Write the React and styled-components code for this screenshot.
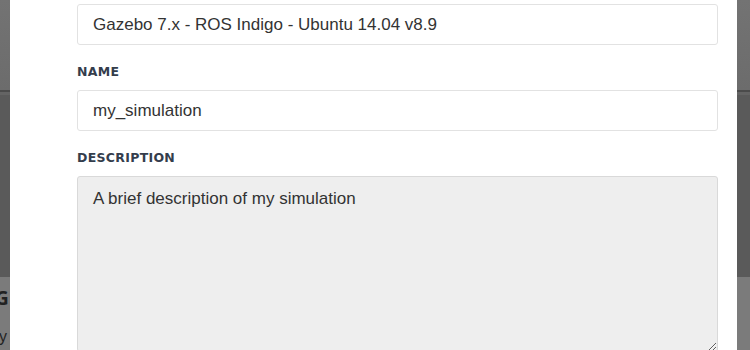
import React from 'react';
import styled, { createGlobalStyle } from 'styled-components';

const GlobalStyle = createGlobalStyle`
  html, body {
    margin: 0;
    padding: 0;
    height: 100%;
    overflow: hidden;
  }
  body {
    font-family: "Liberation Sans", Arial, sans-serif;
  }
`;

// page behind the modal, already dimmed
const Page = styled.div`
  height: 350px;
  display: flex;
  flex-direction: column;
  background: #5b5b5b;
`;

const PageHeader = styled.div`
  height: 90px;
  background: linear-gradient(#737373, #6c6c6c);
  border-bottom: 2px solid #4b4b4b;
`;

const HeaderStrip = styled.div`
  height: 3px;
  background: #646464;
`;

const PageBody = styled.div`
  height: 182px;
  background: #5a5a5a;
`;

const PageFooter = styled.div`
  flex: 1;
  background: #7b7b7b;
  padding: 10px 0 0 0;
  display: flex;
  flex-direction: column;
  gap: 18px;
  color: #222;
`;

const FooterTitle = styled.div`
  font-family: "Open Sans", sans-serif;
  font-weight: 700;
  font-size: 19px;
  margin-left: -5px;
  line-height: 22px;
`;

const FooterText = styled.div`
  font-size: 16px;
  margin-left: -1px;
  line-height: 20px;
`;

const Modal = styled.div`
  position: fixed;
  top: 0;
  left: 10px;
  width: 727px;
  height: 350px;
  background: #fff;
  box-sizing: border-box;
  padding: 4px 19px 0 67px;
  display: flex;
  flex-direction: column;
  overflow: hidden;
`;

const Field = styled.div`
  display: flex;
  flex-direction: column;
`;

const Label = styled.label`
  font-family: "DejaVu Sans", sans-serif;
  font-weight: 700;
  font-size: 12.5px;
  letter-spacing: 0.3px;
  color: #343d4c;
  text-transform: uppercase;
  margin: 20px 0 11px;
  line-height: 14px;
`;

const Input = styled.input`
  box-sizing: border-box;
  height: 41px;
  width: 100%;
  padding: 0 15px;
  border: 1px solid #e2e2e2;
  border-radius: 3px;
  font-family: "Liberation Sans", Arial, sans-serif;
  font-size: 17px;
  color: #333;
  background: ${(p) => (p.disabled ? '#eeeeee' : '#fff')};
  outline: none;
`;

const TextArea = styled.textarea`
  box-sizing: border-box;
  height: 176px;
  width: 100%;
  padding: 11px 15px;
  border: 1px solid #d9d9d9;
  border-radius: 3px;
  font-family: "Liberation Sans", Arial, sans-serif;
  font-size: 17px;
  line-height: 21px;
  color: #333;
  background: #eeeeee;
  resize: vertical;
  outline: none;
`;

export default function App() {
  return (
    <>
      <GlobalStyle />
      <Page>
        <PageHeader />
        <HeaderStrip />
        <PageBody />
        <PageFooter>
          <FooterTitle>G</FooterTitle>
          <FooterText>y</FooterText>
        </PageFooter>
      </Page>
      <Modal>
        <Field>
          <Input readOnly value="Gazebo 7.x - ROS Indigo - Ubuntu 14.04 v8.9" />
        </Field>
        <Field>
          <Label>Name</Label>
          <Input readOnly value="my_simulation" />
        </Field>
        <Field>
          <Label>Description</Label>
          <TextArea readOnly value="A brief description of my simulation" />
        </Field>
      </Modal>
    </>
  );
}
